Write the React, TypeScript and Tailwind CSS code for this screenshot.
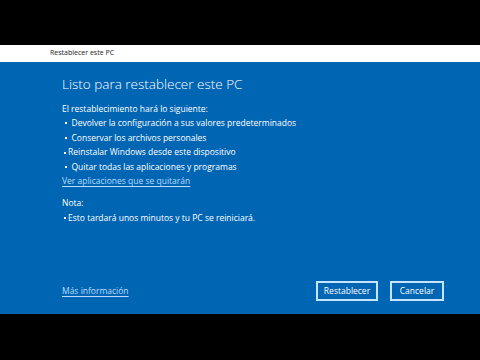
// Windows "Restablecer este PC" confirmation dialog, framed by black bars.

const bullets = [
  { text: "Devolver la configuración a sus valores predeterminados", tight: false },
  { text: "Conservar los archivos personales", tight: false },
  { text: "Reinstalar Windows desde este dispositivo", tight: true },
  { text: "Quitar todas las aplicaciones y programas", tight: false },
];

export default function App() {
  return (
    <div className="flex h-[360px] w-[480px] flex-col bg-black font-['Open_Sans',sans-serif]">
      <div className="h-[45px]" />

      {/* Title bar */}
      <div className="flex h-[17px] items-center bg-white pl-[50px] text-[7px] text-[#1a1a1a]">
        Restablecer este PC
      </div>

      {/* Body */}
      <div className="flex h-[252px] flex-col bg-[#0065b3] pl-[62px] pr-[36px] text-white">
        <h1 className="mt-[10.5px] text-[13.5px] font-light leading-[22px]">
          Listo para restablecer este PC
        </h1>

        <div className="mt-[7px] flex flex-col text-[8.5px] leading-[14.6px]">
          <p>El restablecimiento hará lo siguiente:</p>
          <ul className="flex flex-col">
            {bullets.map((b) => (
              <li
                key={b.text}
                className={
                  b.tight
                    ? "flex items-center gap-[2px] pl-[2px]"
                    : "flex items-center gap-[4.5px] pl-[3px]"
                }
              >
                <span className="h-[2px] w-[2px] bg-white" />
                {b.text}
              </li>
            ))}
          </ul>
          <a className="text-[#b3dcff] underline underline-offset-2">
            Ver aplicaciones que se quitarán
          </a>

          <p className="mt-[7.4px]">Nota:</p>
          <p className="flex items-center gap-[2px] pl-[2px]">
            <span className="h-[2px] w-[2px] bg-white" />
            Esto tardará unos minutos y tu PC se reiniciará.
          </p>
        </div>

        <div className="mt-auto mb-[13px] flex items-center">
          <a className="text-[8.5px] text-[#b3dcff] underline underline-offset-2">
            Más información
          </a>
          <div className="ml-auto flex gap-[12px]">
            <button className="h-[20px] w-[62px] border-2 border-[#c5e4ff] text-[8.5px] text-white">
              Restablecer
            </button>
            <button className="h-[20px] w-[54px] border-2 border-[#c5e4ff] text-[8.5px] text-white">
              Cancelar
            </button>
          </div>
        </div>
      </div>
    </div>
  );
}
